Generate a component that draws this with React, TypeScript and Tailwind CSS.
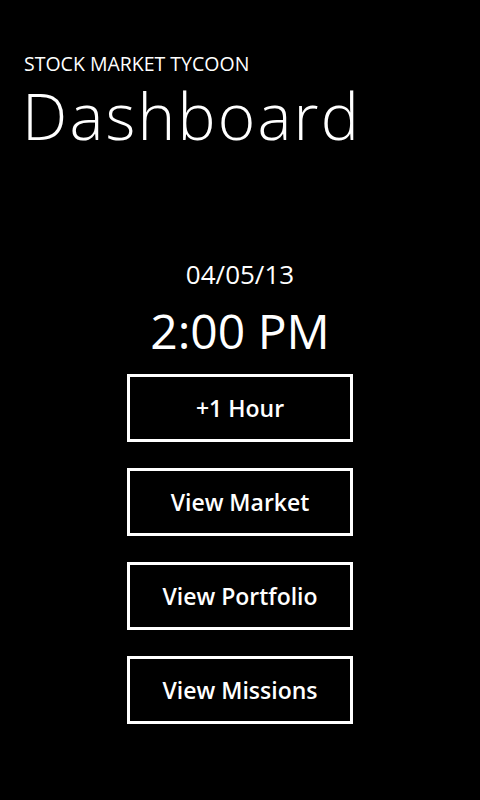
const buttons = ['+1 Hour', 'View Market', 'View Portfolio', 'View Missions']

export default function App() {
  return (
    <div className="w-[480px] h-[800px] bg-black text-white font-['Open_Sans',sans-serif] overflow-hidden">
      <div className="pl-6 pt-[56px]">
        <div className="text-[19.5px] leading-[16px] font-normal">STOCK MARKET TYCOON</div>
        <h1 className="text-[64px] leading-[88px] font-light tracking-[2.2px] -ml-[2px]">Dashboard</h1>
      </div>
      <div className="flex flex-col items-center mt-[97px]">
        <div className="text-[26px] leading-[34px]">04/05/13</div>
        <div className="text-[48px] leading-[58px] mt-[11px]">2:00 PM</div>
        <div className="flex flex-col gap-[26px] mt-[14px]">
          {buttons.map((label) => (
            <button
              key={label}
              type="button"
              className="w-[226px] h-[68px] border-[3px] border-white flex items-center justify-center text-[23px] font-semibold"
            >
              {label}
            </button>
          ))}
        </div>
      </div>
    </div>
  )
}
